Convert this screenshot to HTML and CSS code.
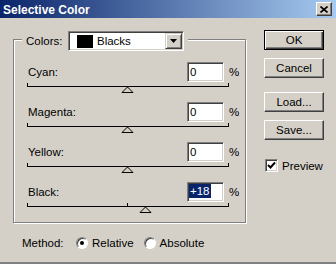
FILE: index.html
```html
<!DOCTYPE html>
<html lang="en">
<head>
  <meta charset="UTF-8">
  <title>Selective Color</title>
  <link rel="stylesheet" href="styles.css">
</head>
<body>
  <div class="window">
    <div class="titlebar">
      <span class="title">Selective Color</span>
      <span class="close">
        <svg width="8" height="7" viewBox="0 0 8 7"><path d="M0.5 0.5 L7.5 6.5 M7.5 0.5 L0.5 6.5" stroke="#000" stroke-width="1.6"/></svg>
      </span>
    </div>

    <div class="body">
      <div class="main">
        <div class="group">
          <div class="legend">
            <span class="legend-label">Colors:</span>
            <div class="select">
              <span class="swatch"></span>
              <span class="select-text">Blacks</span>
              <span class="select-btn">
                <svg width="7" height="4" viewBox="0 0 7 4"><path d="M0 0 H7 L3.5 4 Z" fill="#000"/></svg>
              </span>
            </div>
          </div>

          <div class="row">
            <div class="row-top">
              <span class="label">Cyan:</span>
              <span class="field">0</span>
              <span class="pct">%</span>
            </div>
            <svg class="slider" width="203" height="20" viewBox="0 0 203 20">
              <path d="M0 4.5 H202 M0.5 1 V5 M201.5 1 V5" stroke="#000"/>
              <polygon points="95,10.5 100.5,5 106,10.5" fill="#d4d0c8" stroke="#000"/>
            </svg>
          </div>

          <div class="row">
            <div class="row-top">
              <span class="label">Magenta:</span>
              <span class="field">0</span>
              <span class="pct">%</span>
            </div>
            <svg class="slider" width="203" height="20" viewBox="0 0 203 20">
              <path d="M0 4.5 H202 M0.5 1 V5 M201.5 1 V5" stroke="#000"/>
              <polygon points="95,10.5 100.5,5 106,10.5" fill="#d4d0c8" stroke="#000"/>
            </svg>
          </div>

          <div class="row">
            <div class="row-top">
              <span class="label">Yellow:</span>
              <span class="field">0</span>
              <span class="pct">%</span>
            </div>
            <svg class="slider" width="203" height="20" viewBox="0 0 203 20">
              <path d="M0 4.5 H202 M0.5 1 V5 M201.5 1 V5" stroke="#000"/>
              <polygon points="95,10.5 100.5,5 106,10.5" fill="#d4d0c8" stroke="#000"/>
            </svg>
          </div>

          <div class="row">
            <div class="row-top">
              <span class="label">Black:</span>
              <span class="field active"><span class="sel">+18</span></span>
              <span class="pct">%</span>
            </div>
            <svg class="slider" width="203" height="20" viewBox="0 0 203 20">
              <path d="M0 4.5 H202 M0.5 1 V5 M100.5 1 V5 M201.5 1 V5" stroke="#000"/>
              <polygon points="113,10.5 118.5,5 124,10.5" fill="#d4d0c8" stroke="#000"/>
            </svg>
          </div>
        </div>

        <div class="method">
          <span class="method-label">Method:</span>
          <span class="radio checked"></span>
          <span class="radio-text">Relative</span>
          <span class="radio"></span>
          <span class="radio-text">Absolute</span>
        </div>
      </div>

      <div class="side">
        <button class="btn default">OK</button>
        <button class="btn">Cancel</button>
        <button class="btn load">Load...</button>
        <button class="btn">Save...</button>
        <div class="check">
          <span class="box">
            <svg width="9" height="9" viewBox="0 0 9 9"><path d="M1 4 L3.5 6.5 L8 1.5" stroke="#000" stroke-width="2" fill="none"/></svg>
          </span>
          <span>Preview</span>
        </div>
      </div>
    </div>
  </div>
</body>
</html>
```

FILE: styles.css
```css
body {
  margin: 0;
  font-family: 'Liberation Sans', Arial, sans-serif;
  font-size: 11.5px;
  color: #000;
  background: #d4d0c8;
}

.window {
  width: 336px;
  height: 264px;
  box-sizing: border-box;
  background: #d4d0c8;
  border-bottom: 2px solid #808080;
  overflow: hidden;
}

.titlebar {
  height: 18px;
  display: flex;
  align-items: center;
  justify-content: space-between;
  padding: 0 4px 0 3px;
  background: linear-gradient(to right, #0a246a, #a6caf0);
}

.title {
  color: #fff;
  font-weight: bold;
  font-size: 12px;
  padding-top: 1px;
}

.close {
  width: 16px;
  height: 14px;
  box-sizing: border-box;
  display: flex;
  align-items: center;
  justify-content: center;
  background: #d4d0c8;
  border: 1px solid;
  border-color: #fff #404040 #404040 #fff;
  box-shadow: inset -1px -1px #808080;
}

.body {
  display: flex;
  align-items: flex-start;
}

.main {
  margin: 21px 0 0 13px;
  width: 234px;
}

.group {
  width: 233px;
  height: 184px;
  box-sizing: border-box;
  border: 1px solid #808080;
  box-shadow: 1px 1px 0 #fff, inset 1px 1px 0 #fff;
}

.legend {
  display: flex;
  align-items: center;
  width: max-content;
  margin: -9px 0 0 8px;
  padding: 0 4px 0 4px;
  background: #d4d0c8;
}

.legend-label {
  width: 42px;
}

.select {
  width: 116px;
  height: 20px;
  box-sizing: border-box;
  display: flex;
  align-items: center;
  background: #fff;
  border: 1px solid;
  border-color: #808080 #fff #fff #808080;
  box-shadow: inset 1px 1px #404040, inset -1px -1px #d4d0c8;
}

.swatch {
  width: 16px;
  height: 13px;
  margin-left: 8px;
  background: #000;
}

.select-text {
  margin-left: 4px;
}

.select-btn {
  width: 17px;
  height: 16px;
  box-sizing: border-box;
  margin-left: auto;
  margin-right: 1px;
  display: flex;
  align-items: center;
  justify-content: center;
  background: #d4d0c8;
  border: 1px solid;
  border-color: #d4d0c8 #404040 #404040 #d4d0c8;
  box-shadow: inset 1px 1px #fff, inset -1px -1px #808080;
}

.row {
  margin-top: 11px;
  padding-left: 13px;
}

.row + .row {
  margin-top: 0;
}

.row-top {
  display: grid;
  grid-template-columns: 160px 37px auto;
  align-items: center;
  height: 20px;
}

.label {
  padding-left: 1px;
}

.field {
  height: 20px;
  box-sizing: border-box;
  padding-left: 2px;
  line-height: 18px;
  background: #fff;
  border: 1px solid;
  border-color: #808080 #fff #fff #808080;
  box-shadow: inset 1px 1px #404040, inset -1px -1px #d4d0c8;
}

.field.active {
  padding-left: 1px;
}

.sel {
  display: inline-block;
  vertical-align: top;
  margin-top: 1px;
  padding: 0 1px;
  line-height: 14px;
  background: #0a246a;
  color: #fff;
}

.pct {
  margin-left: 5px;
}

.slider {
  display: block;
}

.method {
  display: flex;
  align-items: center;
  height: 20px;
  margin: 10px 0 0 9px;
}

.method-label {
  width: 54px;
}

.radio {
  position: relative;
  width: 12px;
  height: 12px;
  box-sizing: border-box;
  border-radius: 50%;
  background: #fff;
  border: 1px solid;
  border-color: #808080 #fff #fff #808080;
  box-shadow: inset 1px 1px #404040;
}

.radio.checked::after {
  content: "";
  position: absolute;
  left: 3px;
  top: 3px;
  width: 4px;
  height: 4px;
  border-radius: 50%;
  background: #000;
}

.radio-text {
  margin: 0 10px 0 4px;
}

.side {
  display: flex;
  flex-direction: column;
  margin: 12px 0 0 17px;
}

.btn {
  width: 60px;
  height: 20px;
  box-sizing: border-box;
  margin-bottom: 8px;
  padding: 0;
  font: inherit;
  color: #000;
  background: #d4d0c8;
  border: 1px solid;
  border-color: #fff #404040 #404040 #fff;
  box-shadow: inset -1px -1px #808080;
}

.btn.default {
  border-color: #000;
  box-shadow: inset 1px 1px #fff, inset -1px -1px #404040, inset -2px -2px #808080;
}

.btn.load {
  margin-top: 6px;
}

.check {
  display: flex;
  align-items: center;
  margin: 11px 0 0 1px;
}

.box {
  width: 13px;
  height: 13px;
  box-sizing: border-box;
  display: flex;
  align-items: center;
  justify-content: center;
  margin-right: 4px;
  background: #fff;
  border: 1px solid;
  border-color: #808080 #fff #fff #808080;
  box-shadow: inset 1px 1px #404040, inset -1px -1px #d4d0c8;
}
```
